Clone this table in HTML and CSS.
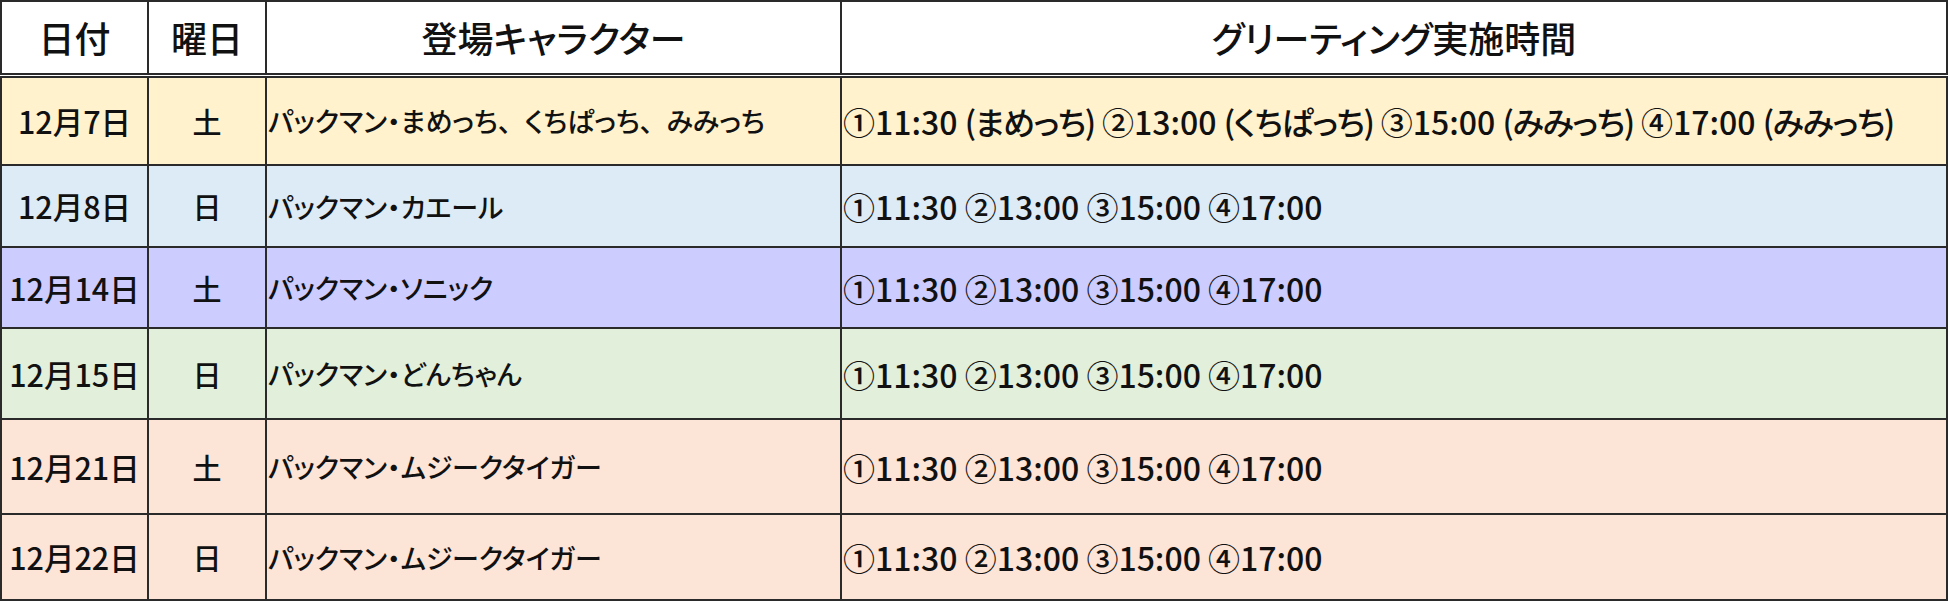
FILE: index.html
```html
<!DOCTYPE html>
<html lang="ja">
<head>
<meta charset="utf-8">
<title>グリーティングスケジュール</title>
<link rel="stylesheet" href="styles.css">
</head>
<body>
<table class="schedule">
  <colgroup>
    <col class="c-date">
    <col class="c-day">
    <col class="c-chara">
    <col class="c-time">
  </colgroup>
  <thead>
    <tr class="head">
      <th>日付</th>
      <th>曜日</th>
      <th>登場キャラクター</th>
      <th>グリーティング実施時間</th>
    </tr>
  </thead>
  <tbody>
    <tr class="r1 yellow">
      <td class="date">12月7日</td>
      <td class="day">土</td>
      <td class="chara">パックマン・まめっち<span class="fw">、</span>くちぱっち<span class="fw">、</span>みみっち</td>
      <td class="time">①11:30 <span class="who">(まめっち)</span> ②13:00 <span class="who">(くちぱっち)</span> ③15:00 <span class="who">(みみっち)</span> ④17:00 <span class="who">(みみっち)</span></td>
    </tr>
    <tr class="r2 blue">
      <td class="date">12月8日</td>
      <td class="day">日</td>
      <td class="chara">パックマン・カエール</td>
      <td class="time">①11:30 ②13:00 ③15:00 ④17:00</td>
    </tr>
    <tr class="r3 purple">
      <td class="date">12月14日</td>
      <td class="day">土</td>
      <td class="chara">パックマン・ソニック</td>
      <td class="time">①11:30 ②13:00 ③15:00 ④17:00</td>
    </tr>
    <tr class="r4 green">
      <td class="date">12月15日</td>
      <td class="day">日</td>
      <td class="chara">パックマン・どんちゃん</td>
      <td class="time">①11:30 ②13:00 ③15:00 ④17:00</td>
    </tr>
    <tr class="r5 peach">
      <td class="date">12月21日</td>
      <td class="day">土</td>
      <td class="chara">パックマン・ムジークタイガー</td>
      <td class="time">①11:30 ②13:00 ③15:00 ④17:00</td>
    </tr>
    <tr class="r6 peach">
      <td class="date">12月22日</td>
      <td class="day">日</td>
      <td class="chara">パックマン・ムジークタイガー</td>
      <td class="time">①11:30 ②13:00 ③15:00 ④17:00</td>
    </tr>
  </tbody>
</table>
</body>
</html>
```

FILE: styles.css
```css
html, body {
  margin: 0;
  padding: 0;
  background: #ffffff;
}

.schedule {
  border-collapse: collapse;
  table-layout: fixed;
  width: 1948px;
  font-family: "Noto Sans CJK JP", "Noto Sans", sans-serif;
  font-feature-settings: "palt";
  color: #111111;
  border: 2px solid #444444;
}

.c-date { width: 147px; }
.c-day { width: 118px; }
.c-chara { width: 575px; }
.c-time { width: auto; }

.schedule th,
.schedule td {
  border: 2px solid #2a2a2a;
  padding: 0;
  vertical-align: middle;
  white-space: nowrap;
  overflow: hidden;
}

.schedule th {
  font-size: 36px;
  font-weight: 500;
  text-align: center;
  background: #ffffff;
  border-bottom: 5px double #2a2a2a;
}

.schedule td {
  font-weight: 500;
  text-align: left;
}

.schedule td.date {
  font-size: 30.5px;
  text-align: center;
}

.schedule td.day {
  font-size: 29px;
  text-align: center;
}

.schedule td.chara {
  font-size: 27px;
  padding-left: 1px;
}

.schedule td.time {
  font-size: 32px;
  padding-left: 1px;
}

.fw {
  font-feature-settings: normal;
}

.who {
  letter-spacing: -1.3px;
}

.head { height: 74px; }
.r1 { height: 90px; }
.r2 { height: 82px; }
.r3 { height: 81px; }
.r4 { height: 91px; }
.r5 { height: 95px; }
.r6 { height: 86px; }

.yellow { background: #fff2cc; }
.blue { background: #ddebf7; }
.purple { background: #ccccff; }
.green { background: #e2efda; }
.peach { background: #fce4d6; }
```
